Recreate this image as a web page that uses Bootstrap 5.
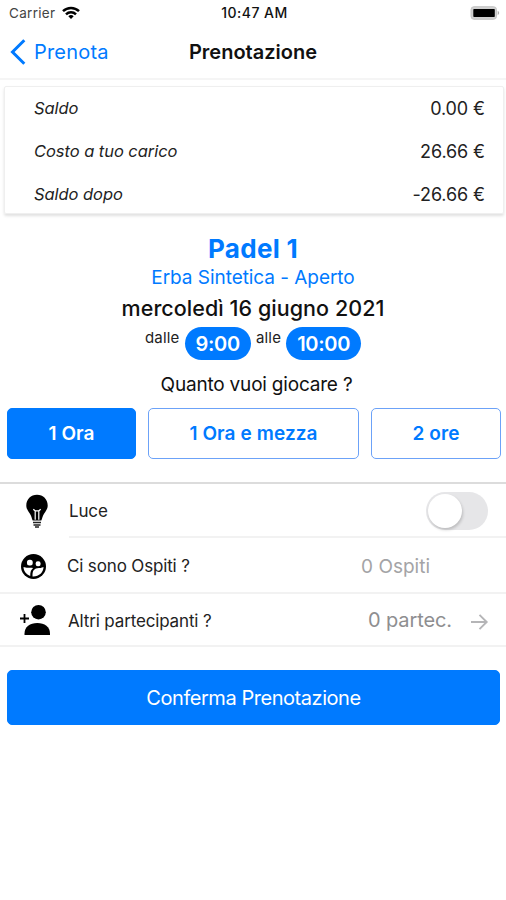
<!DOCTYPE html>
<html lang="it">
<head>
<meta charset="utf-8">
<meta name="viewport" content="width=device-width, initial-scale=1">
<title>Prenotazione</title>
<link href="https://cdn.jsdelivr.net/npm/bootstrap@5.3.0/dist/css/bootstrap.min.css" rel="stylesheet">
<style>
:root{--ios-blue:#007aff}
body{font-family:Inter,"Liberation Sans",sans-serif;background:#fff;color:#111;height:900px;overflow:hidden}
svg{display:block;flex:none}
.ios-blue{color:var(--ios-blue)}
.status{height:26px;font-size:13.5px;line-height:26px;padding:0 6px 0 9px}
.status>*{flex:1 1 0}
.carrier{color:#444;letter-spacing:.3px;gap:7px}
.clock{font-weight:500;font-size:14px;letter-spacing:.45px}
.topbar{height:54px;border-bottom:2px solid #f5f5f5;padding:0 10px}
.topbar>*{flex:1 1 0}
.back{font-size:20px;letter-spacing:.2px;gap:8px;text-decoration:none}
.page-title{font-size:20px;font-weight:600;letter-spacing:0;margin:0}
.summary{margin:6px 2px 0 4px;height:128px;border:1px solid #efefef;border-radius:2px;box-shadow:0 2px 3px rgba(0,0,0,.12);padding:0 18px 0 29px}
.summary-row{height:43px;font-size:18px;letter-spacing:-.1px;color:#222}
.summary-row em{font-size:16.5px;letter-spacing:-.05px}
.court{font-size:26px;font-weight:700;letter-spacing:.3px;line-height:32px;margin:19px 0 0}
.surface{font-size:19px;letter-spacing:-.05px;line-height:24px;padding-top:1px}
.day{font-size:21.5px;font-weight:500;letter-spacing:.05px;line-height:30px;margin-top:3px}
.times{height:33px;margin-top:4px;gap:5px;font-size:15px;letter-spacing:.2px;line-height:22px;color:#222}
.time-pill{background:var(--ios-blue);font-size:20px;font-weight:600;letter-spacing:-.3px;line-height:34px;padding:0 11px;color:#fff}
.ask{font-size:19px;letter-spacing:-.2px;line-height:24px;margin:13px 0 0 7px}
.durations{margin:11px 5px 0 7px;gap:12px}
.btn-slot{--bs-btn-color:var(--ios-blue);--bs-btn-border-color:#6ca2f8;--bs-btn-border-radius:5px;--bs-btn-padding-x:0;--bs-btn-padding-y:0;height:51px;padding-top:2px;font-size:19px;font-weight:600;letter-spacing:.1px}
.btn-slot.active{--bs-btn-active-bg:var(--ios-blue);--bs-btn-active-color:#fff;--bs-btn-active-border-color:var(--ios-blue)}
.slot-a{width:129px}.slot-b{width:211px}.slot-c{width:130px}
.options{margin-top:23px;border-top:2px solid #dcdcdc}
.opt{font-size:17px;letter-spacing:-.15px;color:#222}
.opt-icon{width:69px;padding-left:20px}
.opt-icon.tight{width:67px;padding-left:21px;padding-top:2px}
.opt-icon.mid{width:68px}
.opt-text{padding-top:4px}
.opt-body{border-bottom:2px solid #f2f2f2}
.opt-line{border-bottom:2px solid #f2f2f2}
.h-luce{height:54px}.h-ospiti{height:56px}.h-altri{height:53px}
.toggle{width:62px;height:38px;border-radius:19px;background:#e6e6e8;padding:2px;margin:2px 18px 0 0}
.knob{width:34px;height:34px;border-radius:50%;background:#fff;box-shadow:1px 2px 3px rgba(0,0,0,.18)}
.hint{color:#a4a4a6;font-size:19px;letter-spacing:0;padding-top:4px}
.hint.guests{margin-right:76px}
.hint.people{color:#8e8e90;font-size:20px;letter-spacing:-.1px;margin-right:17px;padding-top:1px}
.btn-confirm{--bs-btn-bg:var(--ios-blue);--bs-btn-border-color:var(--ios-blue);--bs-btn-color:#fff;--bs-btn-border-radius:5px;height:55px;margin:23px 6px 0 7px;padding-top:7px;font-size:20px;letter-spacing:-.45px}
</style>
</head>
<body>
<header>
  <div class="status d-flex align-items-center">
    <div class="carrier d-flex align-items-center"><span>Carrier</span>
      <svg width="18" height="14" viewBox="0 0 18 14" fill="none" stroke="#000" stroke-width="2.5"><path d="M1 5.2a11.6 11.6 0 0 1 16 0M4 8.3a7.2 7.2 0 0 1 10 0"/><path d="M9 13 6.3 10.3a4 4 0 0 1 5.400 0z" fill="#000" stroke="none"/></svg>
    </div>
    <div class="clock text-center">10:47 AM</div>
    <div class="d-flex justify-content-end">
      <svg width="30" height="14" viewBox="0 0 30 14"><rect x="1" y=".7" width="25.5" height="12.6" rx="3" fill="#d0d0d0" stroke="#c4c4c4"/><rect x="3.3" y="3" width="21.5" height="8" rx=".8" fill="#000"/><path d="M27.7 4.800q3 2.200 0 4.400z" fill="#aaa"/></svg>
    </div>
  </div>
  <nav class="topbar d-flex align-items-center">
    <a class="back ios-blue d-flex align-items-center" href="#"><svg width="16" height="26" viewBox="0 0 16 26" fill="none" stroke="#007aff" stroke-width="3"><path d="M14.3 1.3 2.500 13l11.800 11.700"/></svg><span>Prenota</span></a>
    <h1 class="page-title text-center">Prenotazione</h1>
    <span></span>
  </nav>
</header>
<main>
  <section class="summary">
    <div class="summary-row d-flex align-items-center justify-content-between"><em>Saldo</em><span>0.00 €</span></div>
    <div class="summary-row d-flex align-items-center justify-content-between"><em>Costo a tuo carico</em><span>26.66 €</span></div>
    <div class="summary-row d-flex align-items-center justify-content-between"><em>Saldo dopo</em><span>-26.66 €</span></div>
  </section>
  <section class="text-center">
    <h2 class="court ios-blue">Padel 1</h2>
    <div class="surface ios-blue">Erba Sintetica - Aperto</div>
    <div class="day">mercoledì 16 giugno 2021</div>
    <div class="times d-flex justify-content-center"><span>dalle</span><span class="time-pill rounded-pill">9:00</span><span>alle</span><span class="time-pill rounded-pill">10:00</span></div>
    <div class="ask">Quanto vuoi giocare ?</div>
    <div class="durations d-flex">
      <button class="btn btn-slot slot-a active">1 Ora</button>
      <button class="btn btn-slot slot-b">1 Ora e mezza</button>
      <button class="btn btn-slot slot-c">2 ore</button>
    </div>
  </section>
  <section class="options">
    <div class="opt h-luce d-flex">
      <div class="opt-icon d-flex align-items-center">
        <svg width="34" height="34" viewBox="0 0 34 34"><path d="M17 .8C10.800.8 6.300 5.500 6.300 11.400c0 4.500 3.200 6.900 4.700 10.300.9 2 1 3.700 1.700 4.700h8.600c.7-1 .8-2.700 1.700-4.700 1.500-3.400 4.700-5.800 4.700-10.300C27.700 5.500 23.200.8 17 .8z"/><path d="M13.300 15.300l1.800 1.500h3.800l1.800-1.500M15.200 16.800v9M18.800 16.800v9" stroke="#fff" stroke-width="1.200" fill="none"/><path d="M13 28.500h8M13.500 31h7M15 33h4" stroke="#222" stroke-width="1.400"/></svg>
      </div>
      <div class="opt-body flex-grow-1 d-flex align-items-center justify-content-between"><span class="opt-text">Luce</span><div class="toggle"><div class="knob"></div></div></div>
    </div>
    <div class="opt opt-line h-ospiti d-flex align-items-center">
      <div class="opt-icon tight"><svg width="25" height="25" viewBox="0 0 26 26"><circle cx="13" cy="13" r="13"/><g fill="#fff"><rect x="6.200" y="6" width="6" height="6" rx="2.600"/><rect x="15.200" y="7.500" width="5.200" height="5.200" rx="2.300"/><path d="M2.600 13.600c2.600 1.200 6.600.3 10 .9-2.200 1.900-3 4-3 8.300C5.500 21.400 2.700 18 2.600 13.600z"/><path d="M12 23.400c-.2-4.700.7-7.900 5-8.500 2.200-.3 4.400-.2 6.400-1.300.2 5.500-5 10.200-11.400 9.800z"/></g></svg></div>
      <span class="opt-text flex-grow-1">Ci sono Ospiti ?</span><span class="hint guests">0 Ospiti</span>
    </div>
    <div class="opt opt-line h-altri d-flex align-items-center">
      <div class="opt-icon mid"><svg width="31" height="32" viewBox="0 0 31 32"><circle cx="18.500" cy="8.200" r="7.300"/><path d="M4.500 31v-1.500c0-6.500 5.500-10.500 12.800-10.500S30 23 30 29.500V31z"/><path d="M0 14.500h9M4.500 10v9" stroke="#000" stroke-width="1.800"/></svg></div>
      <span class="opt-text pt-1 flex-grow-1">Altri partecipanti ?</span><span class="hint people">0 partec.</span>
      <svg class="me-3 mt-1" width="21" height="18" viewBox="0 0 21 18" fill="none" stroke="#b5b5b7" stroke-width="1.900"><path d="M2 9h15.500M10.500 1.800 17.700 9l-7.200 7.200"/></svg>
    </div>
  </section>
  <div class="d-grid"><button class="btn btn-confirm">Conferma Prenotazione</button></div>
</main>
<script src="https://cdn.jsdelivr.net/npm/bootstrap@5.3.0/dist/js/bootstrap.bundle.min.js"></script>
</body>
</html>
